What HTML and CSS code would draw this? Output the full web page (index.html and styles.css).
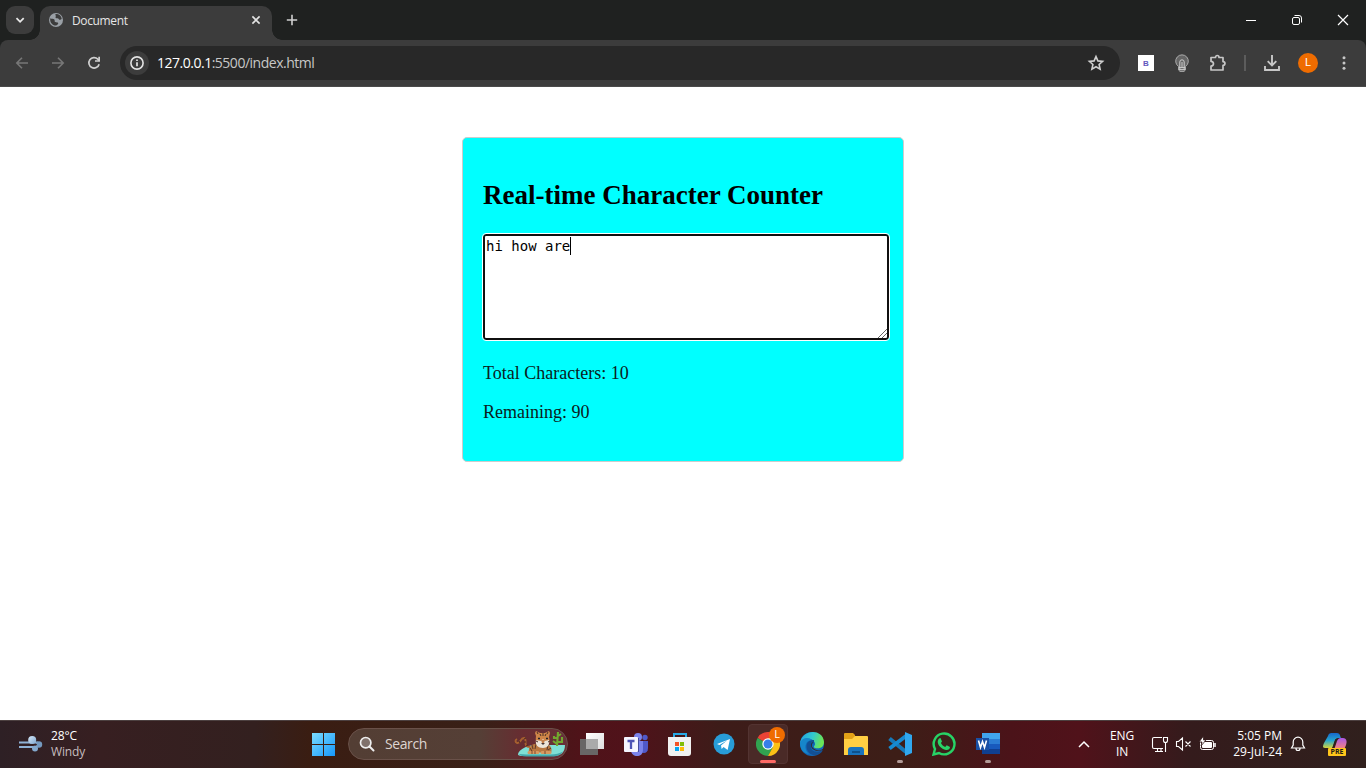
FILE: index.html
```html
<!DOCTYPE html>
<html lang="en">
<head>
<meta charset="utf-8">
<title>Document</title>
<link rel="stylesheet" href="styles.css">
</head>
<body>
<div class="screen">
  <header class="tabstrip">
    <div class="tab-search"><svg width="28" height="28" viewBox="0 0 28 28"><path d="M10.5 12.2l3.6 3.6 3.6-3.6" fill="none" stroke="#e8e8e8" stroke-width="1.8"/></svg></div>
    <div class="tab">
      <svg width="16" height="16" viewBox="0 0 16 16"><circle cx="8" cy="8" r="7" fill="#9aa0a6"/><path d="M2.3 6.2C3.5 7.2 5.6 6.4 6.4 7.6c.8 1.1-.4 1.6.8 2.5 1.3.8 2.8-.2 3 1.2.1 1-1 1.7-2 2.3C4 13.6 1.6 10 2.3 6.2zM7.6 2.1c-.8 1.200.9 1.800 0 2.800-.5.9.7 1.400 1.700 1.300 1.500-.1 1.500 1.900 3 1.600l1.400-.8C13.400 4 11 2 7.600 2.100z" fill="#3c3c3c"/></svg>
      <span class="tab-title">Document</span>
      <svg width="10" height="10" viewBox="0 0 10 10"><path d="M1.4 1.4l7.2 7.2M8.6 1.4L1.4 8.6" stroke="#e3e3e3" stroke-width="1.6"/></svg>
    </div>
    <svg class="new-tab" width="12" height="12" viewBox="0 0 12 12"><path d="M6 .8v10.4M.8 6h10.4" stroke="#d0d0d0" stroke-width="1.6"/></svg>
    <div class="win-buttons">
      <svg width="12" height="12" viewBox="0 0 12 12"><path d="M1 6.5h10" stroke="#fff"/></svg>
      <svg width="12" height="12" viewBox="0 0 12 12" fill="none" stroke="#fff"><rect x="1.5" y="3.5" width="7" height="7" rx="1.5"/><path d="M3.5 1.5H8a2.5 2.5 0 0 1 2.5 2.5v4.5"/></svg>
      <svg width="12" height="12" viewBox="0 0 12 12"><path d="M1 1l10 10M11 1L1 11" stroke="#fff" stroke-width="1.2"/></svg>
    </div>
  </header>
  <nav class="toolbar">
    <div class="nav-icons">
      <svg width="16" height="16" viewBox="0 0 16 16" fill="none" stroke="#777" stroke-width="1.6"><path d="M14 8H3M8 2.8L2.8 8 8 13.2"/></svg>
      <svg width="16" height="16" viewBox="0 0 16 16" fill="none" stroke="#777" stroke-width="1.6"><path d="M2 8h11M8 2.8L13.2 8 8 13.2"/></svg>
      <svg width="16" height="16" viewBox="0 0 16 16"><path d="M13.1 9.2a5.2 5.2 0 1 1-1.300-5l1.500 1.500" fill="none" stroke="#d0d0d0" stroke-width="1.7"/><path d="M14 1.800v5H9V5.300h3.300V1.800z" fill="#d0d0d0"/></svg>
    </div>
    <div class="omnibox">
      <span class="info"><svg width="16" height="16" viewBox="0 0 16 16"><circle cx="8" cy="8" r="6.1" fill="none" stroke="#e3e3e3" stroke-width="1.6"/><path d="M8 7.2v4M8 4.5v1.6" stroke="#e3e3e3" stroke-width="1.7"/></svg></span>
      <span class="url"><b>127.0.0.1</b>:5500/index.html</span>
      <svg width="18" height="18" viewBox="0 0 18 18"><path d="M9 2.600l1.900 4.300 4.700.5-3.500 3.100 1 4.600L9 12.700l-4.100 2.400 1-4.600-3.500-3.100 4.700-.5z" fill="none" stroke="#d0d0d0" stroke-width="1.6"/></svg>
    </div>
    <div class="extensions">
      <span class="ext-b">B</span>
      <svg width="18" height="18" viewBox="0 0 18 18" fill="none" stroke="#aaa"><path d="M5.500 12.400A6.300 6.300 0 1 1 12.500 12.400V16L11 17.400H7L5.500 16z" fill="#666"/><path d="M6.800 15.500V8a2.200 2.200 0 0 1 4.400 0v7.500M9 8v6M6 13.600h6M6 15.600h6" stroke="#ccc"/></svg>
      <svg width="18" height="18" viewBox="0 0 18 18"><path d="M2 3.500h4.500c0-2.700 3.500-2.700 3.500 0h4v4.200c2.600.1 2.600 3.500 0 3.600V16H2v-3.800c3.300-.2 3.300-4.600 0-4.800z" fill="none" stroke="#c7c7c7" stroke-width="1.7" stroke-linejoin="round"/></svg>
      <i class="divider"></i>
      <svg width="18" height="18" viewBox="0 0 18 18"><path d="M9 1v10M4.700 7.200L9 11.500l4.300-4.300M2 12v4h14v-4" fill="none" stroke="#c7c7c7" stroke-width="1.9"/></svg>
      <span class="avatar">L</span>
      <svg width="18" height="18" viewBox="0 0 18 18" fill="#c7c7c7"><circle cx="9" cy="3.800" r="1.500"/><circle cx="9" cy="9" r="1.500"/><circle cx="9" cy="14.200" r="1.500"/></svg>
    </div>
  </nav>
  <main class="page">
    <section class="container">
      <h2>Real-time Character Counter</h2>
      <div class="textarea"><span class="typed">hi how are</span><svg class="grip" width="10" height="10" viewBox="0 0 10 10"><path d="M1 10l9-9M5 10l5-5" stroke="#555" stroke-width=".9"/></svg></div>
      <p>Total Characters: <span>10</span></p>
      <p>Remaining: <span>90</span></p>
    </section>
  </main>
  <footer class="taskbar">
    <div class="weather">
      <svg width="24" height="18" viewBox="0 0 24 18"><defs><linearGradient id="wind" x1="0" y1="0" x2="1" y2="1"><stop stop-color="#d5e7f8"/><stop offset="1" stop-color="#7fa8d0"/></linearGradient></defs><path d="M0 7.500h19M0 12h14" stroke="#8fb2d6" stroke-width="2"/><circle cx="13.200" cy="5" r="4" fill="url(#wind)"/><circle cx="20" cy="9.500" r="3.200" fill="#7499bf"/><circle cx="16" cy="13.500" r="3" fill="#83a8cd"/><path d="M13 9.700h5" stroke="#371f21"/></svg>
      <div class="weather-text"><span>28°C</span><span class="dim">Windy</span></div>
    </div>
    <div class="dock">
      <svg class="start" width="24" height="24" viewBox="0 0 24 24"><defs><linearGradient id="win" x1="0" y1="0" x2="1" y2="1"><stop stop-color="#7bdcff"/><stop offset="1" stop-color="#1597fb"/></linearGradient></defs><path d="M0 1h11v11H0zM12 1h11v11H12zM0 13h11v11H0zM12 13h11v11H12z" fill="url(#win)"/></svg>
      <div class="search">
        <svg width="16" height="16" viewBox="0 0 16 16"><circle cx="6.700" cy="6.700" r="5.200" fill="#80716b" stroke="#eee" stroke-width="1.700"/><path d="M10.500 10.500l4 4" stroke="#eee" stroke-width="2" stroke-linecap="round"/></svg>
        <span>Search</span>
        <svg width="52" height="28" viewBox="0 0 52 28">
          <path d="M4 24c1-4 7-8 16-9h31c0 7-4 11-11 11H12c-5 0-8 0-8-2z" fill="#7fe0d5"/><path d="M5 24q1 2 7 2.500h28q7-1 9-5-5 3-12 3H12z" fill="#43a9ab"/>
          <path d="M16 17c-8 0-2-8-6-9-4 0-3 6-7 5-2-1-2-3 0-4" fill="none" stroke="#a6602f" stroke-width="1.900"/><path d="M12 8l-2 1M12 12h-2M14 15l-2 1M5 11l1 2" stroke="#49271f"/>
          <path d="M15 22c-1-5 3-9 9-8h7c5 0 8 4 6 9z" fill="#b97840"/><path d="M18 15l1 4M22 14l-1 5M16 18l2 3M34 15l-1 5M37 18l-3 2" stroke="#5b392a"/>
          <path d="M22 6l-1-3 1-2 4 2h5l4-2 1 2-1 4c2 6-1 10-6 10-6 0-8-4-7-11z" fill="#ce8548"/><path d="M22 10l5 1 2-2 2 2 4-1c1 5-2 8-6 8-5 0-8-3-7-8z" fill="#ece5d9"/><path d="M27 10h4l-1 3h-2z" fill="#c6814b"/><path d="M27 13h4l-2 2z" fill="#483632"/><path d="M24 8.500h2M32 8.500h2" stroke="#252329" stroke-width="1.500"/><path d="M29 3v3M26 4l1 2M32 4l-1 2M22 11l2 1M36 11l-2 1M23 2l1 2M34 2l-1 2" stroke="#4b3026"/>
          <path d="M15 22.500h9M28 22.500h8" stroke="#d79a61" stroke-width="3" stroke-linecap="round"/><path d="M18 21v3M21 21v3M31 21v3" stroke="#7c4b31"/>
          <path d="M43 16L44 2M43 8H40V6M43 12h5V7M44 6l3-2M43 14l-4-3" fill="none" stroke="#72a82e" stroke-width="2.100"/>
        </svg>
      </div>
      <div class="apps">
        <span class="app"><svg width="24" height="24" viewBox="0 0 24 24"><defs><linearGradient id="pane" x2="1" y2="1"><stop stop-color="#fff"/><stop offset="1" stop-color="#dedede"/></linearGradient></defs><path d="M0 7h18v16H0z" fill="#686666"/><path d="M6 1h18v16H6z" fill="url(#pane)"/><path d="M6 7h12v10H6z" fill="#aaa"/></svg></span>
        <span class="app"><svg width="26" height="24" viewBox="0 0 26 24"><circle cx="15" cy="5" r="4" fill="#7b83eb"/><circle cx="22" cy="5.500" r="2.700" fill="#5059c9"/><path d="M18 9h7v7c0 5-4 6-7 4z" fill="#5059c9"/><path d="M8 9h12v8c0 6-3 7-6 7s-6-2-6-6z" fill="#7b83eb"/><path d="M9 6h7v14H9z" fill="#454b9c"/><rect x="1" y="5" width="14" height="15" rx="1" fill="#f5f5ff"/><path d="M4.500 9h7M8 9v8" stroke="#4d53b5" stroke-width="2.300"/></svg></span>
        <span class="app"><svg width="24" height="24" viewBox="0 0 24 24"><path d="M6 6V2h12v4" fill="none" stroke="#28a9e5" stroke-width="2"/><path d="M0 5h23v16a3 3 0 0 1-3 3H3a3 3 0 0 1-3-3z" fill="#f1f1f1"/><path d="M7 10h4v4H7z" fill="#f35325"/><path d="M12 10h4v4h-4z" fill="#81bc06"/><path d="M7 15h4v4H7z" fill="#05a6f0"/><path d="M12 15h4v4h-4z" fill="#ffba08"/></svg></span>
        <span class="app"><svg width="24" height="24" viewBox="0 0 24 24"><circle cx="12" cy="12" r="10.500" fill="#289dd8"/><path d="M5 12l13-5-2.400 11-4-3-2 2-.6-3.500 6-5-7.600 4.600z" fill="#fff"/></svg></span>
        <span class="app active"><svg width="24" height="24" viewBox="0 0 24 24"><path d="M12 12L1.600 6A12 12 0 0 1 22.400 6H12z" fill="#e94336"/><path d="M1.600 6A12 12 0 0 0 12 24l5.200-9L12 12z" fill="#31a350"/><path d="M22.400 6A12 12 0 0 1 12 24l5-9-5-9z" fill="#fbc116"/><circle cx="12" cy="12" r="5.700" fill="#fff"/><circle cx="12" cy="12" r="4.500" fill="#377fe9"/></svg><b class="badge">L</b></span>
        <span class="app"><svg width="24" height="24" viewBox="0 0 24 24"><defs><linearGradient id="edge" x2="1" y2=".25"><stop stop-color="#249dde"/><stop offset=".55" stop-color="#31c9cf"/><stop offset="1" stop-color="#6be556"/></linearGradient></defs><circle cx="12" cy="12" r="12" fill="#1167b7"/><path d="M0 12C1-3 23-4 24 10c0 6-5 7-9 6-2-1-1-2 0-3 1-7-12-9-15-1z" fill="url(#edge)"/><path d="M14 8C3 7 5 23 15 23c3 0 6-1 8-5-5 3-12 2-12-3 0-3 2-3 3-4z" fill="#134f93"/><path d="M13 10c-2 2-2 7 4 8 3 .7 5 0 7-2v2h-1c-6 2-12 0-12-5 0-1 1-3 2-3z" fill="#3d2018"/><path d="M0 11C2 5 9 5 12 8 5 8 3 17 9 22 3 21 0 17 0 11z" fill="#1686ca"/></svg></span>
        <span class="app"><svg width="24" height="24" viewBox="0 0 24 24"><path d="M0 2a1 1 0 0 1 1-1h8l2 2v5H0z" fill="#e2a117"/><path d="M0 7h8l3-3h12a1 1 0 0 1 1 1v18H0z" fill="#ffcf43"/><path d="M4 23v-5a3 3 0 0 1 3-3h10a3 3 0 0 1 3 3v5z" fill="#1873bd"/><path d="M8 19h8v2H8z" fill="#0d518c"/></svg></span>
        <span class="app running"><svg width="24" height="24" viewBox="0 0 24 24"><path d="M1.500 6.500L18 20" stroke="#1679b8" stroke-width="4"/><path d="M1.500 16.500L18 4" stroke="#178bd1" stroke-width="4"/><path d="M17 0l7 3v18l-7 3z" fill="#30a8ef"/></svg></span>
        <span class="app"><svg width="24" height="24" viewBox="0 0 24 24"><path d="M1.500 22.500L3 17A10.400 10.400 0 1 1 7 21z" fill="#3c211a" stroke="#27d366" stroke-width="2.400"/><path d="M8.500 6L10 9.500 8.900 11c1 2 2.400 3.200 4.300 4l1.500-1.700L18 15c0 2-2 3.400-4 3-5-1.200-8-4.500-8.300-8C5.700 8 7 5.500 8.500 6z" fill="#27d366"/></svg></span>
        <span class="app running"><svg width="24" height="24" viewBox="0 0 24 24"><path d="M6 1h18v6H6z" fill="#41a5ee"/><path d="M6 7h18v5H6z" fill="#2b7cd3"/><path d="M6 12h18v5H6z" fill="#185abd"/><path d="M6 17h18v5H6z" fill="#103f91"/><path d="M0 6h13v12H0z" fill="#1950a5"/><path d="M2.500 8.500l2 7 2-6 2 6 2-7" fill="none" stroke="#fff" stroke-width="1.600"/></svg></span>
      </div>
    </div>
    <div class="tray">
      <svg width="12" height="8" viewBox="0 0 12 8"><path d="M1 7l5-5 5 5" fill="none" stroke="#fff" stroke-width="1.500"/></svg>
      <div class="lang"><span>ENG</span><span>IN</span></div>
      <div class="status">
        <svg width="18" height="18" viewBox="0 0 18 18" fill="none" stroke="#fff" stroke-width="1.100"><path d="M11 2.500H3A1.500 1.500 0 0 0 1.500 4v8A1.500 1.500 0 0 0 3 13.500h9M6.500 13.500v3M10 13.500v3M4 16.500h8M14.500 8v9M12.500 2.500h4v3a2 2 0 0 1-4 0z"/></svg>
        <svg width="18" height="18" viewBox="0 0 18 18" fill="none" stroke="#fff" stroke-width="1.100"><path d="M1.500 6.500h2L7.500 3v12l-4-3.500h-2zM10.500 6.500l5 5M15.500 6.500l-5 5"/></svg>
        <svg width="18" height="18" viewBox="0 0 18 18"><rect x="1.500" y="5.500" width="13" height="9" rx="2" fill="none" stroke="#fff"/><rect x="3" y="7" width="10" height="6" rx="1" fill="#fff"/><path d="M16 8v4" stroke="#fff" stroke-width="1.500"/><path d="M4.500 1L0 7h3l-1 4 5-6H4.500z" fill="#fff" stroke="#321b1b" stroke-width=".8"/></svg>
      </div>
      <div class="clock"><span>5:05 PM</span><span>29-Jul-24</span></div>
      <svg class="bell" width="16" height="18" viewBox="0 0 16 18"><path d="M1.500 13l1.700-3V7a4.800 4.800 0 0 1 9.600 0v3l1.700 3zM6 13.500a2 2 0 0 0 4 0" fill="none" stroke="#fff" stroke-width="1.200"/></svg>
      <div class="copilot"><svg width="24" height="24" viewBox="0 0 24 24"><defs><linearGradient id="ca" x2="0" y2="1"><stop stop-color="#1768cd"/><stop offset=".5" stop-color="#25a6cf"/><stop offset="1" stop-color="#d6d53c"/></linearGradient><linearGradient id="cb" x2="0" y2="1"><stop stop-color="#a857e8"/><stop offset="1" stop-color="#ff8b70"/></linearGradient></defs><path d="M5 4c1-3 2-3 5-3h4c3 0 3 3 4 5h-3c-4 0-4 7-6 10H2c-3 0-2-3-1-5z" fill="url(#ca)"/><path d="M11 18l3-9c1-2 2-3 4-3h2c4 0 4 4 3 7l-2 5h-8z" fill="url(#cb)"/><path d="M10 16l3-9" stroke="#30201d"/></svg><b>PRE</b></div>
    </div>
  </footer>
</div>
</body>
</html>
```

FILE: styles.css
```css
* { box-sizing: border-box; }
body { margin: 0; background: #fff; font-family: "Open Sans", "Noto Sans", sans-serif; overflow: hidden; }
svg { display: block; flex: none; }
.screen { width: 1366px; height: 768px; display: flex; flex-direction: column; }
.tabstrip { height: 40px; background: #1f2120; display: flex; align-items: center; padding-left: 6px; }
.tab-search { width: 28px; height: 28px; border-radius: 9px; background: #3c3c3c; }
.tab { align-self: flex-end; position: relative; width: 232px; height: 34px; margin-left: 6px; padding: 0 11px 6px 8px; border-radius: 10px 10px 0 0; background: #3c3c3c; display: flex; align-items: center; gap: 8px; }
.tab::before, .tab::after { content: ""; position: absolute; bottom: 0; width: 10px; height: 10px; }
.tab::before { left: -10px; background: radial-gradient(circle at 0 0, transparent 9.5px, #3c3c3c 10px); }
.tab::after { right: -10px; background: radial-gradient(circle at 100% 0, transparent 9.5px, #3c3c3c 10px); }
.tab-title { flex: 1; color: #e6e6e6; font-size: 12px; letter-spacing: -.37px; }
.new-tab { margin-left: 14px; }
.win-buttons { display: flex; gap: 34px; margin-left: auto; padding-right: 17px; }
.toolbar { height: 47px; display: flex; align-items: center; background: #3c3c3c; border-bottom: 1px solid #4a4a4a; border-radius: 8px 8px 0 0; box-shadow: 0 -8px 0 #1f2120; clip-path: inset(0); }
.nav-icons { display: flex; gap: 20px; padding-left: 14px; width: 120px; }
.omnibox { width: 1000px; height: 34px; border-radius: 17px; background: #282828; display: flex; align-items: center; padding: 0 15px 0 5px; }
.info { width: 24px; height: 24px; border-radius: 50%; background: #3c3c3c; display: grid; place-items: center; }
.url { flex: 1; margin-left: 8px; padding-bottom: 2px; color: #c7c7c7; font-size: 14px; letter-spacing: -.49px; }
.url b { font-weight: 400; color: #fff; }
.extensions { display: flex; align-items: center; padding-left: 18px; gap: 18px; }
.ext-b { width: 16px; height: 16px; margin-right: 1px; background: #fff; color: #6257bd; display: grid; place-items: center; font: bold 8px "Liberation Sans", sans-serif; }
.divider { width: 2px; height: 16px; background: #5c5c5c; margin: 0 -1px; }
.avatar { width: 20px; height: 20px; border-radius: 50%; background: #ef6c00; color: #fff; font: 11px/20px Roboto, sans-serif; text-align: center; margin: 0 -1px; }
.page { height: 633px; padding-top: 50px; background: #fff; font-family: "Liberation Serif", serif; }
.container { width: 442px; height: 325px; margin: 0 auto; padding: 20px; border: 1px solid #ccc; border-radius: 5px; background: #0ff; font-size: 18px; }
.container h2 { margin: 22px 0 23px; font-size: 27px; line-height: 31px; }
.container p { margin: 0 0 18px; line-height: 21px; color: #0b2020; }
.textarea { position: relative; width: 406px; height: 106px; margin-bottom: 23px; padding: 1px; border: 2px solid #101010; border-radius: 3px; outline: 1px solid #fff; background: #fff; font: 14px/18px "DejaVu Sans Mono", monospace; }
.typed { display: inline-block; height: 18px; border-right: 1px solid #000; }
.grip { position: absolute; right: 0; bottom: 0; }
.taskbar { height: 48px; border-top: 1px solid #4c4040; padding-bottom: 2px; display: flex; align-items: center; color: #fff; font-size: 12px; letter-spacing: -.15px; background: linear-gradient(90deg, #2e2025 0, #371f21 100px, #33201f 255px, #3a1d12 310px, #392017 480px, #4f1319 580px, #50121a 630px, #3d1c19 720px, #3d1e17 900px, #4b1319 1010px, #50121a 1080px, #341b1c 1190px, #30201d 1366px); }
.weather { width: 312px; padding-left: 19px; display: flex; align-items: center; gap: 8px; }
.weather-text, .lang, .clock { display: flex; flex-direction: column; line-height: 16px; }
.dim { color: #c6bdbf; }
.dock { display: flex; align-items: center; }
.search { width: 220px; height: 32px; margin-left: 12px; border: 1px solid #6a5149; border-radius: 16px; background: linear-gradient(90deg, #533e34 0, #553f36 60%, #682c31 80%, #673138); display: flex; align-items: center; padding: 0 1px 0 10px; font-size: 14px; letter-spacing: -.4px; color: #ded5d1; }
.search span { flex: 1; margin-left: 10px; }
.apps { display: flex; padding-left: 2px; }
.app { position: relative; width: 44px; height: 40px; display: grid; place-items: center; }
.active::before { content: ""; position: absolute; inset: 0 2px; border: 1px solid #533331; border-radius: 4px; background: #4a2a27; }
.active svg { position: relative; }
.active::after, .running::after { content: ""; position: absolute; bottom: 1px; left: 14px; width: 16px; height: 3px; border-radius: 2px; background: #ff6a65; }
.running::after { left: 19px; width: 6px; background: #b29b98; }
.badge { position: absolute; left: 23px; top: 3px; width: 16px; height: 16px; border-radius: 50%; background: #ef6c00; font: 10px/16px Roboto, sans-serif; text-align: center; }
.tray { display: flex; align-items: center; margin-left: auto; width: 288px; }
.lang { width: 30px; margin-left: 17px; text-align: center; }
.status { display: flex; gap: 6px; margin-left: 14px; }
.clock { width: 56px; margin-left: 9px; text-align: right; white-space: nowrap; letter-spacing: 0; }
.bell { margin-left: 8px; }
.copilot { position: relative; margin-left: 17px; }
.copilot b { position: absolute; left: 5px; bottom: 0; width: 18px; height: 8px; border-radius: 1px; background: #ffc61b; color: #221a15; font: bold 7px/8px "Open Sans", sans-serif; text-align: center; letter-spacing: 0; }
```
